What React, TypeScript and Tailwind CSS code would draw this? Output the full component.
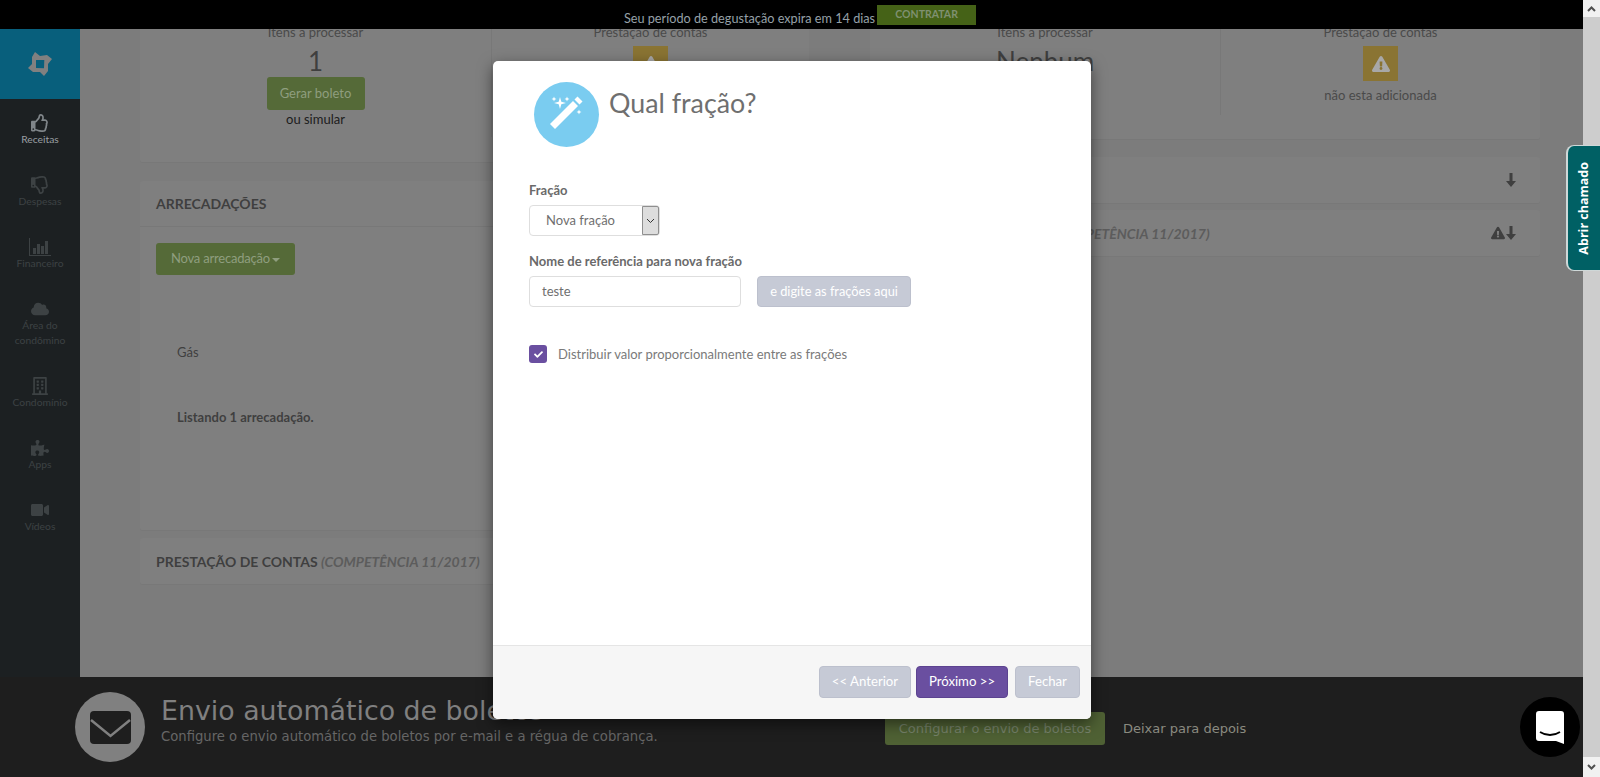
import React from "react";
import { FaExclamationTriangle, FaCheck, FaCloud, FaRegBuilding, FaPuzzlePiece, FaVideo, FaRegThumbsUp, FaRegThumbsDown } from "react-icons/fa";

function Bars() {
  return (
    <svg width="22" height="18" viewBox="0 0 22 18" fill="currentColor">
      <path d="M0 0h1v17h21v1H0z" />
      <rect x="4" y="10" width="3" height="6" />
      <rect x="8" y="6" width="3" height="10" />
      <rect x="12" y="8" width="3" height="8" />
      <rect x="16" y="3" width="3" height="13" />
    </svg>
  );
}

function ArrowDown() {
  return (
    <svg width="10" height="14" viewBox="0 0 10 14" fill="#3f3f3f">
      <path d="M3.500 0h3v8H10L5 14 0 8h3.500z" />
    </svg>
  );
}

function NavItem({ icon, label, active }: { icon: React.ReactNode; label: React.ReactNode; active?: boolean }) {
  return (
    <div className={`h-[62px] flex flex-col items-center text-center text-[10.300px] leading-[15px] ${active ? "text-[#9a9fa2]" : "text-[#3d4244]"}`}>
      <div className={`h-[20px] flex items-center justify-center text-[18px] ${active ? "text-[#80868a]" : "text-[#3d4244]"}`}>{icon}</div>
      <div className="-mt-[1px]">{label}</div>
    </div>
  );
}

function Sidebar() {
  return (
    <aside className="w-[80px] shrink-0 bg-[#1c2022] flex flex-col">
      <div className="h-[70px] bg-[#085f7c] flex items-center justify-center">
        <svg width="26" height="26" viewBox="0 0 26 26">
          <path fillRule="evenodd" fill="#808080" d="M8 1L13 5L20 4L25 8L21 13L21 20L17 25L13 21L6 21L1 17L5 13L5 6ZM9 9L9 17L17 17.300L17.300 9Z" />
        </svg>
      </div>
      <div className="pt-[14px]">
        <NavItem active icon={<FaRegThumbsUp />} label="Receitas" />
        <NavItem icon={<FaRegThumbsDown />} label="Despesas" />
        <NavItem icon={<Bars />} label="Financeiro" />
        <NavItem icon={<FaCloud />} label={<>Área do<br />condômino</>} />
        <div className="h-[15px]" />
        <NavItem icon={<FaRegBuilding />} label="Condomínio" />
        <NavItem icon={<FaPuzzlePiece />} label="Apps" />
        <NavItem icon={<FaVideo />} label="Vídeos" />
      </div>
    </aside>
  );
}

function Stat({ children, title }: { children: React.ReactNode; title: string }) {
  return (
    <div className="flex-1 flex flex-col items-center text-[13px] text-[#4a4a4a]">
      <div className="h-[20px] leading-[20px]">{title}</div>
      {children}
    </div>
  );
}

function WarnBox() {
  return (
    <div className="w-[35px] h-[35px] bg-[#8a7433] flex items-center justify-center text-[#a8a8a8] text-[18px] mt-[4px]">
      <FaExclamationTriangle />
    </div>
  );
}

function RowTitle({ children, right }: { children: React.ReactNode; right?: React.ReactNode }) {
  return (
    <div className="h-[47px] bg-[#7f7f7f] rounded-[3px] border-b border-[#787878] px-[16px] flex items-center justify-between">
      <div className="text-[14px] font-bold text-[#3f3f3f]">{children}</div>
      {right}
    </div>
  );
}

function Background() {
  return (
    <main className="flex-1 bg-[#7c7c7c] overflow-hidden pl-[60px] flex gap-[61px] items-start">
      <div className="w-[669px] -mt-[7px] flex flex-col">
        <div className="bg-[#7f7f7f] rounded-b-[3px] border-b border-[#787878] flex pb-[25px]">
          <div className="h-[115px] w-[352px] border-r border-[#787878]">
            <Stat title="Itens a processar">
              <div className="text-[26px] leading-[30px] mt-[4px] text-[#3f3f3f]">1</div>
              <button className="mt-[1px] h-[33px] w-[98px] rounded-[3px] bg-[#556a38] text-[#8f9e7f] text-[13px]">Gerar boleto</button>
              <div className="text-[#1c1c1c] leading-[20px] -mt-[1px]">ou simular</div>
            </Stat>
          </div>
          <div className="flex-1 flex">
            <Stat title="Prestação de contas"><WarnBox /></Stat>
          </div>
        </div>
        <div className="mt-[18px] h-[350px] bg-[#7f7f7f] rounded-[3px] border-b border-[#787878]">
          <div className="h-[46px] border-b border-[#787878] px-[16px] flex items-center text-[14px] font-bold text-[#3f3f3f]">ARRECADAÇÕES</div>
          <div className="px-[16px] pt-[16px]">
            <button className="h-[32px] w-[139px] rounded-[3px] bg-[#556a38] text-[#8f9e7f] text-[13px] tracking-[-0.2px] flex items-center justify-center gap-[2px]">
              Nova arrecadação
              <span className="border-x-[4px] border-x-transparent border-t-[4px] border-t-[#8f9e7f] mt-[2px]" />
            </button>
            <div className="pl-[21px] text-[13px] text-[#3f3f3f]">
              <div className="mt-[67px] leading-[20px]">Gás</div>
              <div className="mt-[45px] font-bold leading-[20px]">Listando 1 arrecadação.</div>
            </div>
          </div>
        </div>
        <div className="mt-[7px]">
          <RowTitle>PRESTAÇÃO DE CONTAS <i className="text-[#5c5c5c]">(COMPETÊNCIA 11/2017)</i></RowTitle>
        </div>
      </div>
      <div className="w-[670px] -mt-[7px] flex flex-col">
        <div className="bg-[#7f7f7f] rounded-b-[3px] border-b border-[#787878] flex pb-[24px]">
          <div className="h-[93px] w-[351px] border-r border-[#787878]">
            <Stat title="Itens a processar">
              <div className="text-[26px] leading-[30px] mt-[4px] text-[#3f3f3f]">Nenhum</div>
            </Stat>
          </div>
          <div className="flex-1">
            <Stat title="Prestação de contas">
              <WarnBox />
              <div className="mt-[4px] leading-[20px]">não esta adicionada</div>
            </Stat>
          </div>
        </div>
        <div className="mt-[17px]">
          <RowTitle right={<span className="mr-[8px] flex"><ArrowDown /></span>}>ARRECADAÇÕES</RowTitle>
        </div>
        <div className="mt-[6px]">
          <RowTitle right={<span className="flex items-center gap-[1px] text-[#3f3f3f] text-[14px] mr-[8px]"><FaExclamationTriangle /><ArrowDown /></span>}>
            PRESTAÇÃO DE CONTAS <i className="text-[#5c5c5c]">(COMPETÊNCIA 11/2017)</i>
          </RowTitle>
        </div>
      </div>
    </main>
  );
}

function BottomBar() {
  return (
    <div className="absolute left-0 right-[17px] bottom-0 h-[100px] bg-[#1e1e1e] font-['DejaVu_Sans',sans-serif] flex items-center pl-[75px]">
      <div className="w-[70px] h-[70px] rounded-full bg-[#808080] flex items-center justify-center">
        <svg width="41" height="33" viewBox="0 0 41 33">
          <rect width="41" height="33" rx="4" fill="#1e1e1e" />
          <path d="M1 9l19.500 16L40 9" fill="none" stroke="#808080" strokeWidth="2.500" />
        </svg>
      </div>
      <div className="ml-[16px] w-[724px] -mt-[14px]">
        <div className="text-[26.800px] leading-[30px] text-[#808080] whitespace-nowrap">Envio automático de boletos</div>
        <div className="mt-[3px] text-[13.200px] leading-[16px] text-[#666666] whitespace-nowrap">Configure o envio automático de boletos por e-mail e a régua de cobrança.</div>
      </div>
      <button className="h-[33px] w-[220px] rounded-[3px] bg-[#4f6134] text-[#76826a] text-[13px] mt-[3px]">Configurar o envio de boletos</button>
      <span className="ml-[18px] text-[13px] text-[#8a8a80] mt-[3px]">Deixar para depois</span>
    </div>
  );
}

function Modal() {
  return (
    <div className="absolute left-[493px] top-[61px] w-[598px] h-[658px] bg-white rounded-[5px] shadow-[0_5px_15px_rgba(0,0,0,0.5)] flex flex-col font-['Lato',sans-serif] overflow-hidden">
      <div className="flex-1 pl-[36px] pr-[20px]">
        <div className="flex pt-[21px] pl-[5px]">
          <div className="w-[65px] h-[65px] rounded-full bg-[#7accf0]">
            <svg width="65" height="65" viewBox="0 0 65 65" fill="white">
              <path d="M16 42l23-23 5 5-23 23z" />
              <path d="M40.500 17.500l3-3 5 5-3 3z" />
              <path d="M26 15l1.300 4.700L32 21l-4.700 1.300L26 27l-1.300-4.700L20 21l4.700-1.300z" />
              <path d="M20 14.500l.7 1.800 1.800.7-1.800.7-.7 1.800-.7-1.800-1.800-.7 1.800-.7zM33 14.500l.7 1.800 1.800.7-1.800.7-.7 1.800-.7-1.800-1.800-.7 1.800-.7zM45 27.500l.7 1.800 1.800.7-1.800.7-.7 1.800-.7-1.800-1.800-.7 1.800-.7z" />
            </svg>
          </div>
          <h1 className="ml-[10px] mt-[3px] text-[26.800px] leading-[36px] text-[#6f6f6f]">Qual fração?</h1>
        </div>
        <div className="mt-[33px] text-[13px] font-bold text-[#6a6a6a] leading-[20px]">Fração</div>
        <div className="mt-[5px] w-[131px] h-[31px] border border-[#dedede] rounded-[4px] flex items-center justify-between text-[13px] text-[#6f6f6f] pl-[16px]">
          <span>Nova fração</span>
          <span className="w-[17px] h-[29px] bg-[#dddddd] border border-[#8f8f8f] rounded-r-[2px] flex items-center justify-center">
            <svg width="9" height="6" viewBox="0 0 9 6"><path d="M1 1l3.500 3.500L8 1" fill="none" stroke="#333" strokeWidth="1" /></svg>
          </span>
        </div>
        <div className="mt-[15px] text-[13px] font-bold text-[#6a6a6a] leading-[20px]">Nome de referência para nova fração</div>
        <div className="mt-[5px] flex gap-[16px]">
          <div className="w-[212px] h-[31px] border border-[#dedede] rounded-[4px] flex items-center pl-[12px] text-[13px] text-[#6f6f6f]">teste</div>
          <button className="w-[154px] h-[31px] rounded-[4px] bg-[#c6cad6] border border-[#bcc0cd] text-[12.800px] text-white">e digite as frações aqui</button>
        </div>
        <div className="mt-[37px] flex items-center gap-[11px]">
          <span className="w-[18px] h-[18px] rounded-[3px] bg-[#6a4fa0] flex items-center justify-center text-white text-[9px]"><FaCheck /></span>
          <span className="text-[13px] text-[#7a7a7a] mt-[1px]">Distribuir valor proporcionalmente entre as frações</span>
        </div>
      </div>
      <div className="h-[74px] bg-[#f6f6f6] border-t border-[#e5e5e5] flex items-start justify-end gap-[5px] pt-[20px] pr-[11px] text-[13.200px] text-white">
        <button className="w-[92px] h-[32px] rounded-[4px] bg-[#c6cad6] border border-[#bcc0cd]">&lt;&lt; Anterior</button>
        <button className="w-[92px] h-[32px] rounded-[4px] bg-[#6a4fa0] border border-[#5c4390]">Próximo &gt;&gt;</button>
        <button className="w-[65px] h-[32px] rounded-[4px] bg-[#c6cad6] border border-[#bcc0cd] ml-[2px]">Fechar</button>
      </div>
    </div>
  );
}

function Scrollbar() {
  return (
    <div className="w-[17px] shrink-0 bg-[#f1f1f1] flex flex-col">
      <div className="h-[17px] flex items-center justify-center">
        <svg width="9" height="6" viewBox="0 0 9 6"><path d="M1 5l3.500-3.500L8 5" fill="none" stroke="#505050" strokeWidth="2" /></svg>
      </div>
      <div className="flex-1 bg-[#cdcdcd]" />
      <div className="h-[20px] flex items-center justify-center">
        <svg width="9" height="6" viewBox="0 0 9 6"><path d="M1 1l3.500 3.500L8 1" fill="none" stroke="#505050" strokeWidth="2" /></svg>
      </div>
    </div>
  );
}

export default function App() {
  return (
    <div className="relative w-[1600px] h-[777px] overflow-hidden flex font-['Lato',sans-serif]">
      <div className="flex-1 flex flex-col min-w-0">
        <header className="h-[29px] shrink-0 bg-black flex items-start justify-center">
          <span className="text-[#96a0a8] text-[12.700px] mt-[8px] leading-[20px] ml-[17px]">Seu período de degustação expira em 14 dias</span>
          <span className="ml-[2px] mt-[5px] w-[99px] h-[20px] bg-[#456217] text-[#7f9070] text-[10.500px] font-bold flex items-center justify-center">CONTRATAR</span>
        </header>
        <div className="flex-1 flex min-h-0">
          <Sidebar />
          <Background />
        </div>
      </div>
      <Scrollbar />
      <BottomBar />
      <Modal />
      <div className="absolute right-0 top-[145px] w-[34px] h-[126px] bg-[#006064] border-l-2 border-y border-[#cfd8d8] rounded-l-[8px] flex items-center justify-center">
        <span className="[writing-mode:vertical-rl] rotate-180 text-white text-[12.500px] font-bold font-['Open_Sans',sans-serif] whitespace-nowrap">Abrir chamado</span>
      </div>
      <div className="absolute left-[1520px] top-[697px] w-[60px] h-[60px] rounded-full bg-black flex items-center justify-center">
        <svg width="28" height="33" viewBox="0 0 28 33">
          <path fill="white" d="M3 0h22a3 3 0 0 1 3 3v30l-8-3H3a3 3 0 0 1-3-3V3a3 3 0 0 1 3-3z" />
          <path d="M4 21c6 4 14 4 20 0" fill="none" stroke="black" strokeWidth="1.800" />
        </svg>
      </div>
    </div>
  );
}
